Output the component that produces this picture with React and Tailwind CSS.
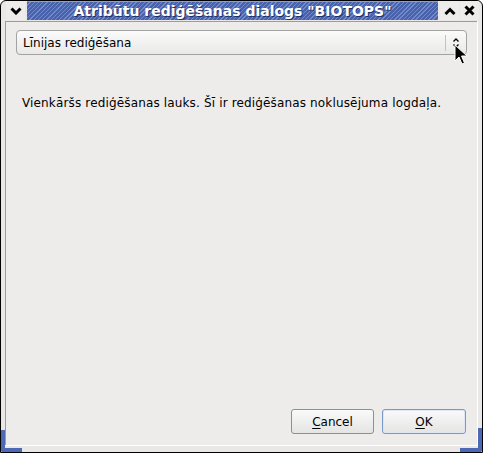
import React from "react";

const font = { fontFamily: '"DejaVu Sans", "Liberation Sans", sans-serif' };

function Chevron({ up }) {
  return (
    <svg width="12" height="8" viewBox="0 0 12 8">
      <path
        d={up ? "M1.5 7 L6 2.5 L10.5 7" : "M1.5 1.5 L6 6 L10.5 1.5"}
        fill="none"
        stroke="#000"
        strokeWidth="3"
      />
    </svg>
  );
}

function CloseGlyph() {
  return (
    <svg width="11" height="11" viewBox="0 0 11 11">
      <path d="M1.5 1.5 L9.5 9.5 M9.5 1.5 L1.5 9.5" stroke="#000" strokeWidth="3" />
    </svg>
  );
}

function TitleButton({ children }) {
  return (
    <div className="h-[19px] w-[19px] flex items-center justify-center bg-[#edeceb]">
      {children}
    </div>
  );
}

function Cursor() {
  return (
    <svg width="14" height="22" viewBox="0 0 14 22">
      <path
        d="M1 1 L1 17 L5 13 L8 20 L10.5 19 L7.5 12 L13 12 Z"
        fill="#000"
        stroke="#fff"
        strokeWidth="1"
      />
    </svg>
  );
}

export default function App() {
  return (
    <div className="w-[483px] h-[453px] bg-white" style={font}>
      <div className="relative w-[483px] h-[453px] border border-black rounded-t-[6px] bg-[#e9e8e6] flex flex-col overflow-hidden">
        {/* title bar */}
        <div className="h-[19px] flex items-stretch pl-[5px] pr-[3px] shrink-0">
          <TitleButton>
            <Chevron />
          </TitleButton>
          <div className="flex-1 mx-[2px] flex items-center justify-center bg-[#4d69b3] bg-[repeating-linear-gradient(135deg,#4862ac_0px,#4862ac_2px,#7289cb_2px,#7289cb_3px)] border-t border-[#8ea0d6]">
            <span className="text-white font-bold text-[14px] leading-none [text-shadow:1px_1px_0_#1f2f66]">
              Atribūtu rediģēšanas dialogs "BIOTOPS"
            </span>
          </div>
          <TitleButton>
            <Chevron up />
          </TitleButton>
          <div className="w-[1px]" />
          <TitleButton>
            <CloseGlyph />
          </TitleButton>
        </div>

        {/* body */}
        <div className="flex-1 flex px-[4px] pt-[1px]">
          <div className="flex-1 flex flex-col border-l border-t border-[#9c9c9a] bg-[#edeceb] px-[10px] pt-[8px] pb-[11px]">
            <div className="relative h-[25px] w-[451px] rounded-[4px] border border-[#a3a3a1] bg-gradient-to-b from-[#fbfbfb] to-[#e9e9e8] flex items-center">
              <span className="flex-1 pl-[6px] text-[12px] text-black">Līnijas rediģēšana</span>
              <div className="w-px h-[16px] bg-[#c2c2c0]" />
              <div className="w-[20px] flex flex-col items-center justify-center">
                <svg width="8" height="12" viewBox="0 0 8 12">
                  <path d="M1.5 4.5 L4 2 L6.5 4.5 M1.5 7.5 L4 10 L6.5 7.5" fill="none" stroke="#000" strokeWidth="1.3" />
                </svg>
              </div>
              <div className="absolute left-[437px] top-[13px]">
                <Cursor />
              </div>
            </div>
            <p className="mt-[40px] pl-[6px] text-[12px] tracking-[0.15px] text-black leading-[16px]">
              Vienkāršs rediģēšanas lauks. Šī ir rediģēšanas noklusējuma logdaļa.
            </p>
            <div className="flex-1" />
            <div className="flex justify-end gap-[8px] pr-[1px]">
              <button className="w-[83px] h-[25px] rounded-[3px] border border-[#8f8f8d] bg-gradient-to-b from-[#fafafa] to-[#e4e4e2] text-[12px] text-black">
                <span className="underline underline-offset-2">C</span>ancel
              </button>
              <button className="w-[84px] h-[25px] rounded-[3px] border border-[#7c98c8] bg-gradient-to-b from-[#fafafa] to-[#e4e4e2] text-[12px] text-black shadow-[inset_0_0_0_1px_#dfe7f4]">
                <span className="underline underline-offset-2">O</span>K
              </button>
            </div>
          </div>
          <div className="w-px bg-[#ffffff]" />
        </div>

        {/* bottom frame */}
        <div className="h-[7px] shrink-0 border-t border-white" />

        {/* resize handles */}
        <div className="absolute left-0 bottom-0 w-[21px] h-[22px] border-l-[4px] border-b-[4px] border-[#4d69b3] rounded-bl-[2px]" />
        <div className="absolute right-0 bottom-0 w-[22px] h-[24px] border-r-[4px] border-b-[4px] border-[#4d69b3] rounded-br-[2px]" />
      </div>
    </div>
  );
}
